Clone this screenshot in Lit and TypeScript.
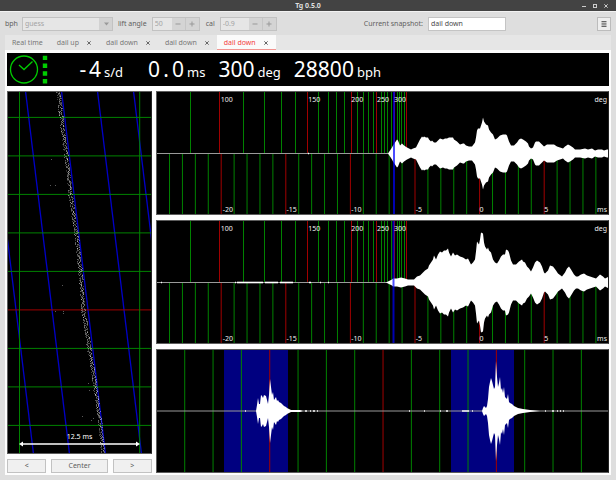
import { LitElement, html, css, svg } from "lit";
import { customElement, property } from "lit/decorators.js";

type Point = [number, number];
type Label = { text: string; x: number };

const pairs = (flat: string): Point[] =>
  flat
    .trim()
    .split(/\s+/)
    .map((p) => p.split(",").map(Number) as Point);

const TIC = pairs(`232,0 234,3 236,6 237,8 239,11 241,14 242,13 244,8 246,10 248,8 251,6 253,5 255,4 257,5 260,6
262,10 264,14 266,17 267,16 268,17 270,16 272,16 273,14 275,12 276,13 278,11 280,11 282,13 284,15 287,14 289,15 291,15 293,16
295,16 297,16 298,14 301,12 304,9 307,10 308,10 310,8 313,7 316,7 319,11 320,16 321,23 322,25 324,25 326,31 327,36 328,32
330,29 332,28 333,24 335,21 337,19 339,14 341,15 344,18 347,19 350,19 351,18 353,12 355,8 358,8 361,11 363,14 365,15
367,14 370,12 372,10 373,7 375,5 377,6 379,11 380,12 383,12 386,9 388,7 391,9 394,9 398,9 401,7 404,6 407,5 409,7
412,9 414,8 417,6 419,4 424,4 429,5 432,4 436,5 439,3 442,4 446,4 448,3 451,4 453,4`);

const TOC = pairs(`230,0 232,1 234,2 236,3 237,4 241,4 245,5 249,4 252,3 256,3 258,3 261,6 264,7 267,10 269,12
272,14 273,17 275,20 277,23 278,27 280,23 282,28 284,31 286,30 288,32 290,32 292,34 293,30 295,26 297,30 299,27 301,28
304,26 307,25 310,23 312,24 314,20 315,18 317,20 319,23 320,31 321,41 323,38 324,43 325,50 327,49 328,40 329,36 331,33
332,35 333,32 335,30 337,23 339,20 341,19 343,22 345,26 347,28 349,28 350,33 352,32 353,30 355,22 357,18 360,18 363,21
366,23 367,21 369,20 371,16 373,14 375,11 377,15 379,20 381,22 384,20 386,16 388,10 389,9 392,12 394,17 397,16 400,12
402,9 406,6 409,10 411,14 413,16 415,13 418,8 420,6 422,6 425,8 428,9 431,7 434,6 437,5 440,4 442,6 444,8 447,6
449,4 453,6`);

const BEAT_A = pairs(`100,0 101,6 102,13 103,7 104,7 105,16 106,15 107,13 108,16 110,15 111,11 112,7 113,16 114,32
115,24 116,16 117,19 118,11 120,14 121,10 122,11 123,9 125,8 127,6 128,5 130,4 131,3 133,2 135,1 144,1 147,0`);

const BEAT_B = pairs(`326,0 327,3 328,5 330,3 331,5 332,12 333,24 334,29 335,33 336,30 337,26 338,22 339,24 340,50
341,34 342,24 343,28 344,34 345,21 346,23 347,18 348,24 349,14 351,12 352,17 353,9 354,8 356,7 358,5 360,4 362,3 367,2
374,1 384,0`);

const DEGREES: Point[] = pairs(`34,0 63,1 87,0 108,0 125,0 139,0 151,1 162,0 172,0 180,0 188,0 195,1 201,0 207,0 212,0
217,0 220,1 225,0 228,0 231,0 235,0 238,1 241,0 243,0 245,0 248,0 250,1`);

const DEGREE_LABELS: Label[] = [
  { text: "100", x: 64 },
  { text: "150", x: 152 },
  { text: "200", x: 195 },
  { text: "250", x: 221 },
  { text: "300", x: 238 },
];
const MS_LABELS: Label[] = [
  { text: "-20", x: 66 },
  { text: "-15", x: 130 },
  { text: "-10", x: 195 },
  { text: "-5", x: 260 },
  { text: "0", x: 324 },
  { text: "5", x: 389 },
];

const W = 453;
const H = 124;

const envelope = (points: Point[], mid: number) =>
  [
    ...points.map(([x, h]) => `${x},${mid - h}`),
    ...[...points].reverse().map(([x, h]) => `${x},${mid + h}`),
  ].join(" ");

const plotStyles = css`
  :host {
    display: block;
    position: relative;
    min-width: 0;
    box-sizing: border-box;
    background: #000;
    border: 1px solid #5c5c5c;
    border-right-color: #222;
    overflow: hidden;
  }
  svg {
    position: absolute;
    left: -1px;
    top: -1px;
    width: calc(100% + 2px);
    height: calc(100% + 2px);
  }
  .green { stroke: #008200; }
  .red { stroke: #a00000; }
  .blue { stroke: #0000c8; stroke-width: 1.3; }
  .wave { fill: #fff; }
  .axis { stroke: #9a9a9a; }
  .noise { stroke: #fff; stroke-width: 2; }
  .cursor { stroke: #00f; stroke-opacity: 0.7; stroke-width: 2; }
  .window { fill: #000080; }
  .label {
    position: absolute;
    font: 7px/8px "Noto Sans", sans-serif;
    color: #f0f0f0;
    white-space: nowrap;
  }
  .top { top: 4px; }
  .bottom { bottom: 0; }
  .unit { right: 1px; }
`;

@customElement("beat-plot")
class BeatPlot extends LitElement {
  static styles = [plotStyles, css`.noise { stroke-width: 1.6; }`];

  @property({ attribute: false }) points: Point[] = [];
  @property({ attribute: false }) noise: Point[] = [];
  @property({ type: Number }) cursor = 238;

  render() {
    const mid = 62.5;
    const ticks = Array.from({ length: 34 }, (_, i) => i - 24);
    return html`
      <svg viewBox="0 0 ${W} ${H}" preserveAspectRatio="none" aria-hidden="true">
        ${DEGREES.map(
          ([x, major]) => svg`<line class=${major ? "red" : "green"} x1=${x + 0.5} x2=${x + 0.5} y1="0" y2=${mid} />`
        )}
        ${ticks.map((n) => {
          const x = 323.6 + 12.92 * n;
          return svg`<line class=${n % 5 ? "green" : "red"} x1=${x} x2=${x} y1=${mid} y2=${H} />`;
        })}
        <line class="axis" x1="0" x2=${W} y1=${mid} y2=${mid} />
        ${this.noise.map(([a, b]) => svg`<line class="noise" x1=${a} x2=${b} y1=${mid} y2=${mid} />`)}
        <polygon class="wave" points=${envelope(this.points, mid)} />
        <line class="cursor" x1=${this.cursor} x2=${this.cursor} y1="0" y2=${H} />
      </svg>
      ${DEGREE_LABELS.map((l) => html`<span class="label top" style="left:${(l.x / W) * 100}%">${l.text}</span>`)}
      ${MS_LABELS.map((l) => html`<span class="label bottom" style="left:${(l.x / W) * 100}%">${l.text}</span>`)}
      <span class="label top unit">deg</span>
      <span class="label bottom unit">ms</span>
    `;
  }
}

@customElement("period-plot")
class PeriodPlot extends LitElement {
  static styles = plotStyles;

  render() {
    const mid = 62;
    const noise = pairs("89,90 149,151 154,155 157,159 161,162 253,254 268,269 284,285 290,292 306,313 316,317 389,390 396,398 401,402 404,405 407,408");
    return html`
      <svg viewBox="0 0 ${W} ${H}" preserveAspectRatio="none" aria-hidden="true">
        <rect class="window" x="68" y="0" width="64" height=${H} />
        <rect class="window" x="295" y="0" width="63" height=${H} />
        ${Array.from({ length: 15 }, (_, i) => {
          const x = 0.4 + 28.33 * (i + 1);
          return svg`<line class=${(i + 1) % 4 ? "green" : "red"} x1=${x} x2=${x} y1="0" y2=${H} />`;
        })}
        <line class="axis" x1="0" x2=${W} y1=${mid} y2=${mid} />
        ${noise.map(([a, b]) => svg`<line class="noise" x1=${a} x2=${b} y1=${mid} y2=${mid} stroke-opacity="0.7" />`)}
        <polygon class="wave" points=${envelope(BEAT_A, mid)} />
        <polygon class="wave" points=${envelope(BEAT_B, mid)} />
      </svg>
    `;
  }
}

const TRACE = pairs("51,0 54,26 56,45 59,65 63,103 69,142 73,180 76,219 82,257 88,296 93,334 96,363");
const STRAYS = pairs("44,68 43,94 48,94 55,194 48,220 56,220 56,222 82,299 81,292 75,325 84,329 86,327");

const traceDots = (): [number, number, number][] => {
  let seed = 7;
  const rand = () => (seed = (seed * 16807) % 2147483647) / 2147483647;
  const dots: [number, number, number][] = [];
  for (let y = 1; y < 362; y++) {
    const i = Math.max(1, TRACE.findIndex((p) => p[1] >= y));
    const [x0, y0] = TRACE[i - 1];
    const [x1, y1] = TRACE[i];
    const x = x0 + ((x1 - x0) * (y - y0)) / (y1 - y0);
    for (let k = 0; k < 3; k++) {
      dots.push([Math.round(x + (rand() - 0.5) * 4), y, 0.12 + rand() * 0.33]);
    }
  }
  return dots;
};

@customElement("paper-strip")
class PaperStrip extends LitElement {
  static styles = [
    plotStyles,
    css`
      .dot { fill: #fff; }
      .arrow { stroke: #fff; stroke-width: 1.4; }
      .head { fill: #fff; }
      .span { left: 0; right: 0; bottom: 12px; text-align: center; color: #fff; }
    `,
  ];

  render() {
    return html`
      <svg viewBox="0 0 145 363" preserveAspectRatio="none" aria-hidden="true">
        ${[-1, 0, 1, 2, 3].map(
          (k) => svg`<line class="blue" x1=${18.5 + 36 * k} y1="0" x2=${62.5 + 36 * k} y2="363" />`
        )}
        ${Array.from({ length: 9 }, (_, i) => {
          const y = 26.4 + 38.5 * i;
          return svg`<line class=${i === 5 ? "red" : "green"} x1="0" x2="145" y1=${y} y2=${y} />`;
        })}
        <line class="green" x1="12.5" x2="12.5" y1="0" y2="363" />
        <line class="green" x1="132.7" x2="132.7" y1="0" y2="363" />
        ${traceDots().map(
          ([x, y, o]) => svg`<rect class="dot" x=${x} y=${y} width="1" height="1" fill-opacity=${o} />`
        )}
        ${STRAYS.map(([x, y]) => svg`<rect class="dot" x=${x} y=${y} width="1" height="1" fill-opacity="0.35" />`)}
        <line class="arrow" x1="14" x2="131" y1="353" y2="353" />
        <polygon class="head" points="12,353 16,350.5 16,355.5" />
        <polygon class="head" points="133,353 129,350.5 129,355.5" />
      </svg>
      <span class="label span">12.5 ms</span>
    `;
  }
}

@customElement("app-root")
class AppRoot extends LitElement {
  static styles = css`
    :host {
      display: flex;
      flex-direction: column;
      min-height: 100vh;
      box-sizing: border-box;
      padding-bottom: 5px;
      background: #dedede;
      color: #5e5e5e;
      font: 7px/10px "Noto Sans", sans-serif;
    }
    button, input, select {
      box-sizing: border-box;
      margin: 0;
      padding: 0;
      font: inherit;
      color: inherit;
      border-radius: 0;
      appearance: none;
    }
    svg { display: block; }
    .titlebar {
      display: grid;
      grid-template-columns: 1fr auto 1fr;
      align-items: center;
      height: 12px;
      padding-right: 0;
      background: #434343;
      border-bottom: 1px solid #f2f2f2;
      box-sizing: border-box;
      color: #dedede;
    }
    .title { grid-column: 2; margin: 0; font: bold 7px/10px "Noto Sans", sans-serif; }
    .controls { display: flex; justify-content: flex-end; gap: 3px; padding-right: 6px; }
    .controls button { width: 8px; height: 10px; border: 0; background: none; display: grid; place-items: center; }
    .toolbar { display: flex; align-items: center; height: 23px; padding: 0 5px; gap: 5px; }
    .toolbar label { white-space: nowrap; }
    .toolbar > label:first-child { margin-right: -1px; }
    .combo, .spin { display: flex; position: relative; height: 14px; color: #a4a4a4; }
    .combo select {
      width: 91px;
      padding-left: 2px;
      border: 1px solid #c2c2c2;
      background: linear-gradient(to left, #d2d2d2 13px, #e6e6e6 13px);
      opacity: 1;
    }
    .combo svg { position: absolute; right: 4px; top: 5px; }
    .spin { border: 1px solid #c2c2c2; box-sizing: border-box; background: #e6e6e6; margin-right: 1px; }
    .spin input { width: 19px; padding-left: 2px; border: 0; background: none; }
    .spin input.wide { width: 28px; }
    .spin button { width: 14px; border: 0; border-right: 1px solid #c6c6c6; background: #d4d4d4; display: grid; place-items: center; }
    .spin button:last-child { border-right: 0; width: 13px; }
    .snapshot { display: flex; align-items: center; gap: 5px; margin-left: auto; }
    .snapshot input { width: 78px; height: 14px; padding-left: 2px; border: 1px solid #c4c4c4; background: #fff; color: #4a4a4a; }
    .menu { width: 14px; height: 14px; margin-left: 86px; border: 1px solid #bcbcbc; background: #eee; display: grid; place-items: center; }
    .tabs { display: flex; height: 15px; margin: 0 5px; background: #e6e6e6; }
    .tab { display: flex; align-items: center; padding: 0 7px; gap: 7px; color: #777; }
    .tab button { border: 0; background: none; white-space: nowrap; }
    .tab .close { width: 6px; height: 6px; color: #666; display: grid; place-items: center; }
    .tab.active { background: #fafafa; color: #f4403e; box-shadow: inset 0 -1px #f29490; }
    .page {
      flex: 1;
      display: flex;
      flex-direction: column;
      gap: 5px;
      margin: 0 5px;
      padding: 3px 2px 2px;
      background: #fdfdfd;
    }
    .readout {
      display: flex;
      align-items: center;
      gap: 13px;
      height: 33px;
      background: #000;
      color: #fff;
    }
    .readout svg { flex: none; margin-right: -10px; }
    .reading { display: flex; align-items: baseline; gap: 3px; padding-top: 2px; font-size: 13px; line-height: 30px; white-space: nowrap; }
    .value { font-size: 21px; text-align: right; }
    .padded { min-width: 48px; }
    .cell { display: inline-block; width: 12px; text-align: center; }
    .plots { flex: 1; display: grid; grid-template-columns: 145fr 453fr; gap: 4px; }
    .left, .right { display: flex; flex-direction: column; gap: 5px; min-width: 0; }
    paper-strip { flex: 1; min-height: 200px; }
    beat-plot, period-plot { flex: 1; min-height: 80px; }
    .nav { display: flex; gap: 5px; height: 14px; }
    .nav button { flex: 39; border: 1px solid #c2c2c2; background: #f0f0f0; }
    .nav .center { flex: 57; }
  `;

  private tab(name: string, closable = true, active = false) {
    return html`<div class="tab ${active ? "active" : ""}">
      <button role="tab" aria-selected=${active}>${name}</button>
      ${closable
        ? html`<button class="close" aria-label="Close tab">
            <svg width="4" height="4" viewBox="0 0 4 4"><path d="M0.3 0.3L3.7 3.7M3.7 0.3L0.3 3.7" stroke="currentColor" /></svg>
          </button>`
        : ""}
    </div>`;
  }

  private steppers() {
    return html`
      <button disabled aria-label="Decrease"><svg width="6" height="6" viewBox="0 0 6 6"><path d="M0.5 3H5.5" stroke="#999" /></svg></button>
      <button disabled aria-label="Increase"><svg width="6" height="6" viewBox="0 0 6 6"><path d="M0.5 3H5.5M3 0.5V5.5" stroke="#999" /></svg></button>
    `;
  }

  render() {
    return html`
      <header class="titlebar">
        <h1 class="title">Tg 0.5.0</h1>
        <div class="controls">
          <button aria-label="Minimize"><svg width="4" height="4" viewBox="0 0 4 4"><path d="M0 2.5H4" stroke="#ccc" /></svg></button>
          <button aria-label="Maximize"><svg width="4" height="4" viewBox="0 0 4 4"><rect x="0.5" y="0.5" width="3" height="3" fill="none" stroke="#ccc" /></svg></button>
          <button aria-label="Close"><svg width="4" height="4" viewBox="0 0 4 4"><path d="M0.3 0.3L3.7 3.7M3.7 0.3L0.3 3.7" stroke="#ccc" /></svg></button>
        </div>
      </header>
      <div class="toolbar">
        <label for="bph">bph</label>
        <div class="combo">
          <select id="bph" disabled><option>guess</option></select>
          <svg width="5" height="4" viewBox="0 0 5 4"><path d="M0 0.5H5L2.5 3.5Z" fill="#999" /></svg>
        </div>
        <label for="lift">lift angle</label>
        <div class="spin"><input id="lift" disabled .value=${"50"} />${this.steppers()}</div>
        <label for="cal">cal</label>
        <div class="spin"><input id="cal" class="wide" disabled .value=${"-0.9"} />${this.steppers()}</div>
        <div class="snapshot">
          <label for="snap">Current snapshot:</label>
          <input id="snap" .value=${"dail down"} />
        </div>
        <button class="menu" aria-label="Menu">
          <svg width="6" height="6" viewBox="0 0 6 6"><path d="M0.5 0.5H5.5M0.5 2.2H5.5M0.5 3.9H5.5M0.5 5.5H5.5" stroke="#666" /></svg>
        </button>
      </div>
      <nav class="tabs" role="tablist">
        ${this.tab("Real time", false)} ${this.tab("dail up")} ${this.tab("dail down")} ${this.tab("dail down")}
        ${this.tab("dail down", true, true)}
      </nav>
      <main class="page">
        <section class="readout">
          <svg width="43" height="33" viewBox="0 0 43 33" fill="none" stroke="#00cc00">
            <circle cx="17" cy="16.5" r="13.5" stroke-width="1.3" />
            <path d="M12 12L17 16.5L25.5 8.5" stroke-width="1.3" />
            <path d="M38 2.7V34" stroke-width="4.4" stroke-dasharray="4.4 3.4" />
          </svg>
          <div class="reading"><span class="value padded"><span class="cell">-</span>4</span><span>s/d</span></div>
          <div class="reading"><span class="value padded">0<span class="cell">.</span>0</span><span>ms</span></div>
          <div class="reading"><span class="value">300</span><span>deg</span></div>
          <div class="reading"><span class="value">28800</span><span>bph</span></div>
        </section>
        <section class="plots">
          <div class="left">
            <paper-strip></paper-strip>
            <div class="nav">
              <button aria-label="Shift left">&lt;</button>
              <button class="center">Center</button>
              <button aria-label="Shift right">&gt;</button>
            </div>
          </div>
          <div class="right">
            <beat-plot .points=${TIC} .noise=${pairs("152,153")} .cursor=${238}></beat-plot>
            <beat-plot
              .points=${TOC}
              .noise=${pairs("5,6 79,80 81,107 109,122 124,137 153,155 164,165 172,173")}
              .cursor=${237.5}
            ></beat-plot>
            <period-plot></period-plot>
          </div>
        </section>
      </main>
    `;
  }
}
